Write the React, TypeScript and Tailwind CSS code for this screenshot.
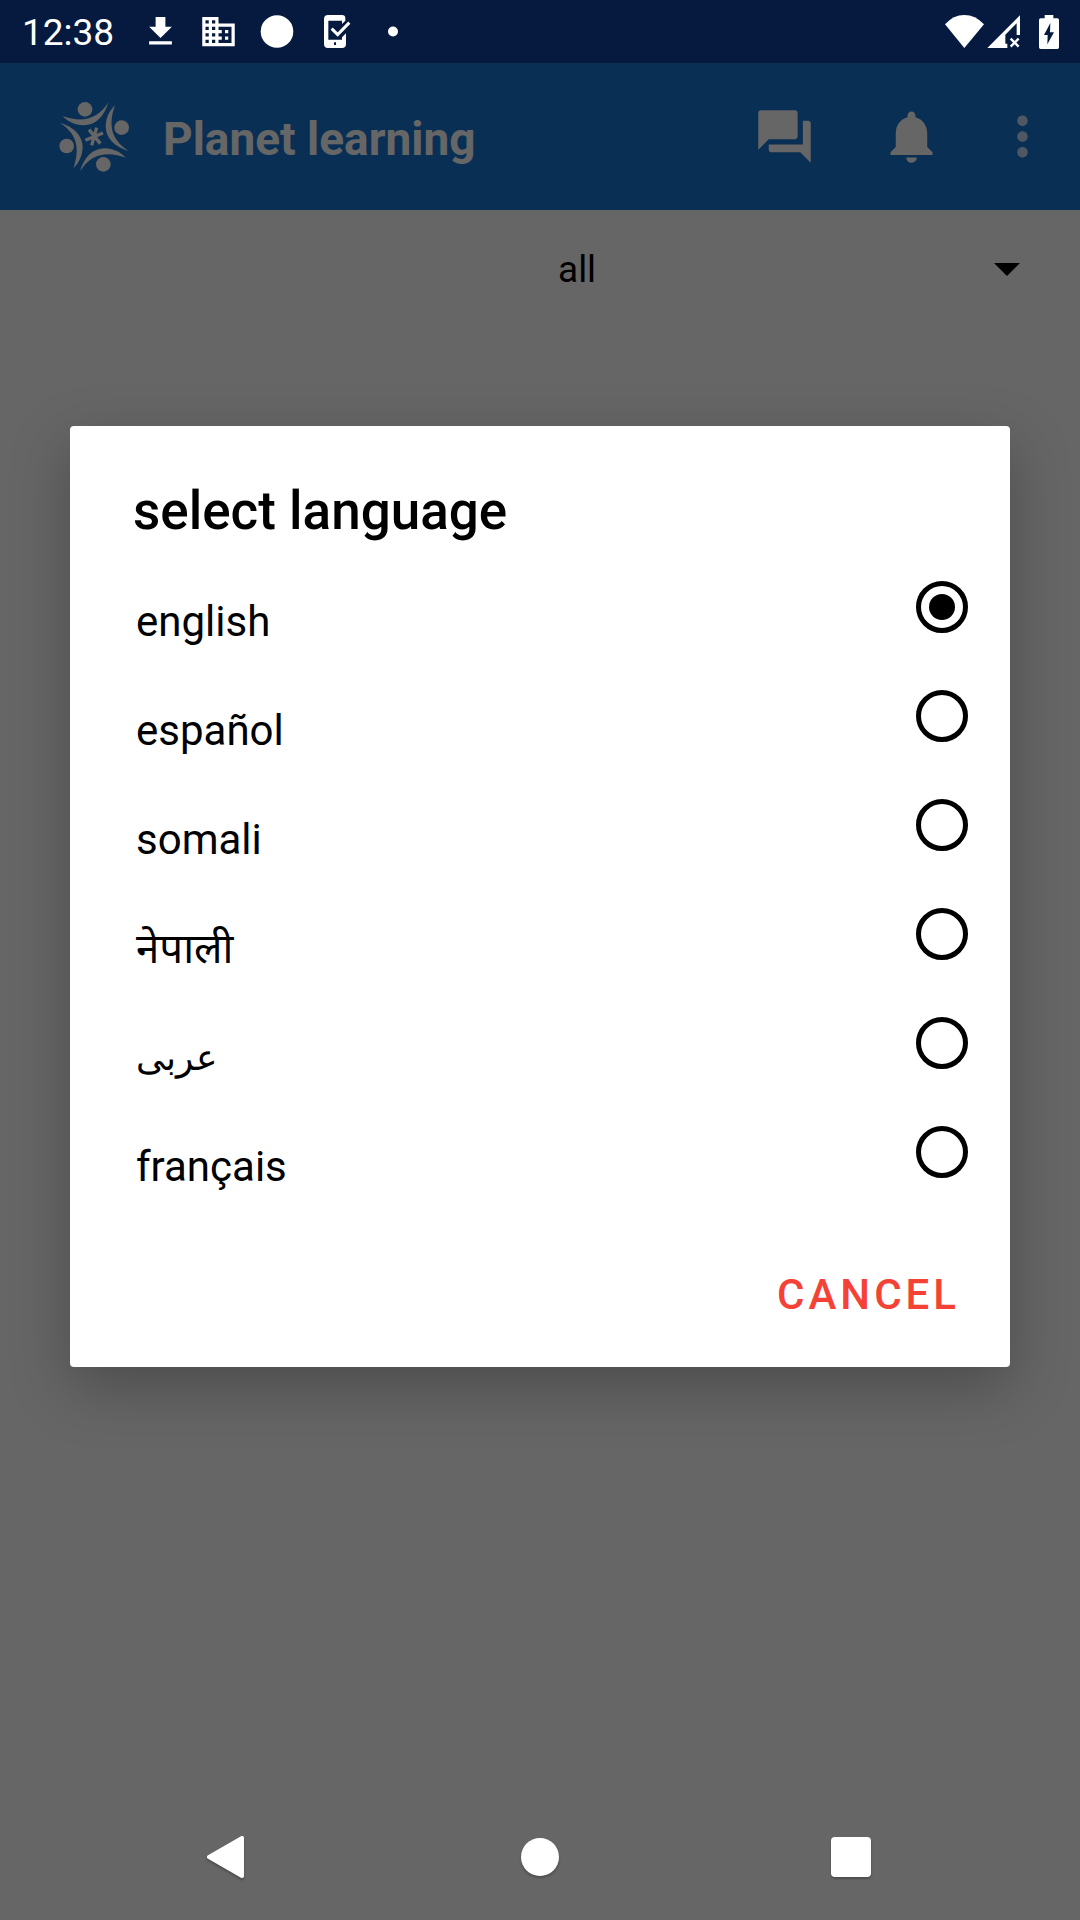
import React, { useState } from "react";
import { MdBusiness, MdFileDownload, MdForum, MdMoreVert, MdNotifications } from "react-icons/md";

const languages = [
  { name: "english", text: "text-[42px]" },
  { name: "español", text: "text-[42px]" },
  { name: "somali", text: "text-[42px]" },
  { name: "नेपाली", text: "text-[42px]" },
  { name: "عربى", text: "text-[36px]" },
  { name: "français", text: "text-[42px]" },
];

function PlanetLogo() {
  return (
    <svg viewBox="27 35 210 210" className="size-[70px]" fill="currentColor" aria-hidden="true">
      {[0, 90, 180, 270].map((angle) => (
        <g key={angle} transform={`rotate(${angle} 132.5 139.5)`}>
          <circle cx="105" cy="57" r="22" />
          <path d="M38 77C86 94 138 96 175 36C163 78 137 105 101 105C74 104 53 93 38 77Z" />
        </g>
      ))}
      <path
        d="M140 112L125 165M117 118L151 160M159 128L106 150"
        stroke="currentColor"
        strokeWidth="10"
      />
    </svg>
  );
}

function StatusBar() {
  return (
    <div className="relative z-20 flex h-[63px] shrink-0 items-center justify-between bg-[#061a3f] pr-5 pl-[22px] text-white">
      <div className="flex items-center">
        <span className="w-[119px] pt-0.5 text-[37px] leading-[44px]">12:38</span>
        <div className="flex items-center gap-[19px]">
          <MdFileDownload className="size-[39px]" />
          <MdBusiness className="size-[39px]" />
          <svg viewBox="0 0 39 39" className="size-[39px]" fill="currentColor">
            <circle cx="20" cy="19.5" r="16.3" />
          </svg>
          <svg viewBox="945 36 117 117" className="size-[39px]">
            <path
              fill="currentColor"
              fillRule="evenodd"
              d="M984 45H1026Q1036 45 1036 55V62L1026 72V62H985V119H1026V112L1038 100V132Q1038 144 1026 144H984Q972 144 972 132V57Q972 45 984 45ZM1002 127V135H1008V127Z"
            />
            <path d="M995 86L1013 104L1048 68" fill="none" stroke="currentColor" strokeWidth="9" />
          </svg>
          <svg viewBox="0 0 39 39" className="size-[39px]" fill="currentColor">
            <circle cx="20" cy="19.5" r="5" />
          </svg>
        </div>
      </div>
      <svg viewBox="135 42 345 102" className="h-[34px] w-[115px]" fill="currentColor">
        <path d="M193 141L135 70Q160 42 193 42Q226 42 252 70Z" />
        <path d="M262 141L360 43V102H350V67L316 101V128H322V141Z" />
        <path d="M332 113L356 137M356 113L332 137" stroke="currentColor" strokeWidth="7" />
        <path
          fillRule="evenodd"
          d="M434 42H460V52H472Q477 52 477 57V139Q477 144 472 144H422Q417 144 417 139V57Q417 52 422 52H434ZM451 66L432 102H443L442 130L462 94H450Z"
        />
      </svg>
    </div>
  );
}

function AppBar() {
  return (
    <header className="flex h-[147px] shrink-0 items-center bg-[#1976d2] pr-[26px] pl-[59px] text-white">
      <PlanetLogo />
      <h1 className="ml-[34px] flex-1 pt-1 text-[46px] leading-[56px] font-bold">Planet learning</h1>
      <button type="button" aria-label="Chat" className="mr-16">
        <MdForum className="size-[63px]" />
      </button>
      <button type="button" aria-label="Notifications" className="mr-12">
        <MdNotifications className="size-[63px]" />
      </button>
      <button type="button" aria-label="More options" className="text-white/75">
        <MdMoreVert className="size-[63px]" />
      </button>
    </header>
  );
}

function NavigationBar() {
  return (
    <nav className="relative z-20 flex h-[126px] shrink-0 items-center justify-center gap-[248px] text-white">
      <button type="button" aria-label="Back">
        <svg viewBox="0 0 64 64" className="size-16 drop-shadow-[0_2px_1px_rgba(0,0,0,0.25)]">
          <path
            d="M13 32L46 13V51Z"
            fill="currentColor"
            stroke="currentColor"
            strokeWidth="4"
            strokeLinejoin="round"
          />
        </svg>
      </button>
      <button type="button" aria-label="Home">
        <svg viewBox="0 0 64 64" className="size-16 drop-shadow-[0_2px_1px_rgba(0,0,0,0.25)]">
          <circle cx="32" cy="32" r="19" fill="currentColor" />
        </svg>
      </button>
      <button type="button" aria-label="Recent apps">
        <svg viewBox="0 0 64 64" className="size-16 drop-shadow-[0_2px_1px_rgba(0,0,0,0.25)]">
          <rect x="11" y="12" width="40" height="40" rx="4" fill="currentColor" />
        </svg>
      </button>
    </nav>
  );
}

function LanguageDialog() {
  const [selected, setSelected] = useState("english");
  return (
    <div
      role="dialog"
      aria-labelledby="dialog-title"
      className="mx-[70px] mt-[426px] w-full self-start rounded-[4px] bg-white pt-[53px] pb-10 shadow-[0_20px_60px_rgba(0,0,0,0.26)]"
    >
      <h2 id="dialog-title" className="px-[63px] text-[53px] leading-[64px] font-medium">
        select language
      </h2>
      <div role="radiogroup" aria-labelledby="dialog-title" className="mt-2.5">
        {languages.map(({ name, text }) => (
          <label key={name} className="flex h-[109px] items-start justify-between pr-[42px] pl-[66px]">
            <span className={`pt-[45px] leading-[48px] ${text}`}>{name}</span>
            <input
              type="radio"
              name="language"
              value={name}
              checked={selected === name}
              onChange={() => setSelected(name)}
              className="mt-7 grid size-[52px] appearance-none place-items-center rounded-full border-[5px] border-black before:size-[26px] before:rounded-full checked:before:bg-black"
            />
          </label>
        ))}
      </div>
      <div className="mt-14 flex justify-end pr-[50px]">
        <button type="button" className="text-[42px] leading-[64px] font-medium tracking-[4px] text-[#f44336]">
          CANCEL
        </button>
      </div>
    </div>
  );
}

export default function App() {
  return (
    <div className="relative flex min-h-screen flex-col bg-white font-[Roboto,'Noto_Sans',sans-serif] text-black">
      <StatusBar />
      <AppBar />
      <main className="flex flex-1 flex-col items-end">
        <div className="relative flex h-[118px] w-1/2 items-center">
          <select
            aria-label="Filter"
            className="h-full w-full appearance-none bg-transparent pt-0.5 pl-[18px] text-[37px] leading-[44px]"
          >
            <option>all</option>
          </select>
          <svg
            viewBox="0 0 26 13"
            className="pointer-events-none absolute right-[60px] h-[13px] w-[26px]"
            fill="currentColor"
          >
            <path d="M0 0H26L13 13Z" />
          </svg>
        </div>
      </main>
      <div className="absolute inset-0 z-10 flex bg-black/60">
        <LanguageDialog />
      </div>
      <NavigationBar />
    </div>
  );
}
